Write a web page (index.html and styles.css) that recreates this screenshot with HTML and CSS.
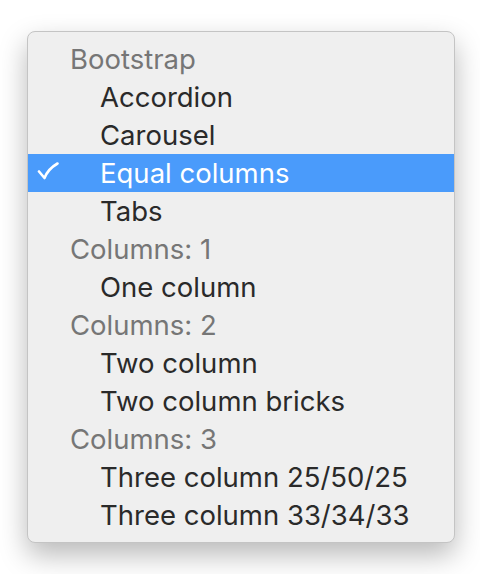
FILE: index.html
```html
<!DOCTYPE html>
<html>
<head>
<meta charset="utf-8">
<link rel="stylesheet" href="styles.css">
</head>
<body>
<div class="menu">
  <div class="row header">Bootstrap</div>
  <div class="row item">Accordion</div>
  <div class="row item">Carousel</div>
  <div class="row item selected"><svg class="check" width="22" height="18" viewBox="0 0 22 18"><path d="M2 9.5 L7.5 16 Q11 7 20.5 1.5" fill="none" stroke="#ffffff" stroke-width="2.6" stroke-linecap="round" stroke-linejoin="round"/></svg>Equal columns</div>
  <div class="row item">Tabs</div>
  <div class="row header">Columns: 1</div>
  <div class="row item">One column</div>
  <div class="row header">Columns: 2</div>
  <div class="row item">Two column</div>
  <div class="row item">Two column bricks</div>
  <div class="row header">Columns: 3</div>
  <div class="row item">Three column 25/50/25</div>
  <div class="row item">Three column 33/34/33</div>
</div>
</body>
</html>
```
FILE: styles.css
```css
html, body {
  margin: 0;
  padding: 0;
  background: #ffffff;
  width: 480px;
  height: 574px;
  overflow: hidden;
}
body {
  padding: 31px 0 0 27px;
  box-sizing: border-box;
  font-family: Inter, "Liberation Sans", sans-serif;
}
.menu {
  width: 428px;
  box-sizing: border-box;
  background: #efefef;
  border: 1px solid #c4c4c4;
  border-radius: 8px;
  padding: 8px 0;
  box-shadow: 0 12px 28px rgba(0, 0, 0, 0.28);
}
.row {
  position: relative;
  height: 38px;
  line-height: 38px;
  font-size: 27.5px;
  white-space: nowrap;
}
.header {
  padding-left: 42px;
  color: #767676;
}
.item {
  padding-left: 72px;
  color: #2a2a2a;
}
.selected {
  background: #4a9bfb;
  color: #ffffff;
}
.check {
  position: absolute;
  left: 9px;
  top: 8px;
}
```
